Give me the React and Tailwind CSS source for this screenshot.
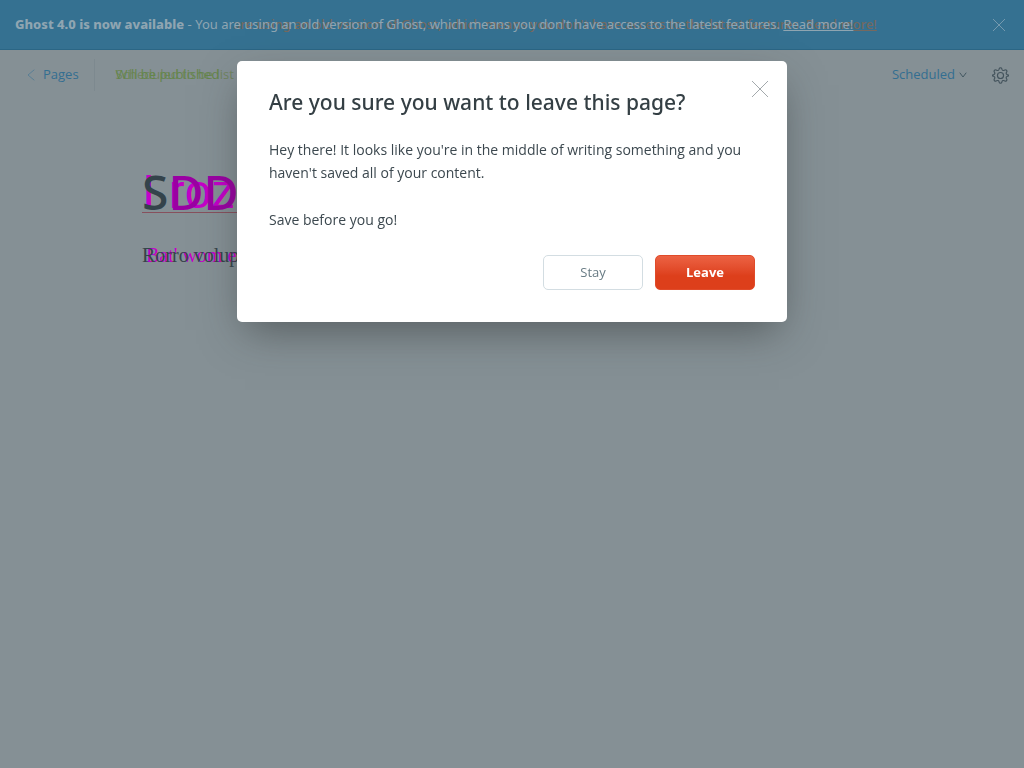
function CloseIcon({ className }) {
  return (
    <svg viewBox="0 0 16 16" className={className} fill="none" stroke="currentColor" aria-hidden="true">
      <path d="M0 0 16 16M16 0 0 16" strokeWidth="0.9" vectorEffect="non-scaling-stroke" />
    </svg>
  );
}

function Chevron({ className, d, viewBox }) {
  return (
    <svg viewBox={viewBox} className={className} fill="none" stroke="currentColor" strokeLinecap="round" aria-hidden="true">
      <path d={d} />
    </svg>
  );
}

function GearIcon() {
  return (
    <svg viewBox="0 0 24 24" className="size-[17px]" fill="none" stroke="currentColor" strokeWidth="1.6" strokeLinejoin="round" aria-hidden="true">
      <circle cx="12" cy="12" r="4.3" />
      <path d="M10.2 2.2C10.6.7 13.4.7 13.8 2.2l.3 1.2c.4 1.4 1.9 2 3.2 1.3l1.1-.6c1.3-.7 3.2 1.2 2.5 2.5l-.6 1.1c-.7 1.3 0 2.8 1.3 3.2l.9.2c1.1.4 1.1 1.4 0 1.8l-.9.2c-1.4.4-2 1.9-1.3 3.2l.6 1.1c.7 1.3-1.2 3.2-2.5 2.5l-1.1-.6c-1.3-.7-2.8 0-3.2 1.3l-.3 1.2c-.4 1.5-3.2 1.5-3.6 0l-.3-1.2c-.4-1.4-1.9-2-3.2-1.3l-1.1.6c-1.3.7-3.2-1.2-2.5-2.5l.6-1.1c.7-1.3 0-2.8-1.3-3.2l-.9-.2c-1.1-.4-1.1-1.4 0-1.8l.9-.2c1.4-.4 2-1.9 1.3-3.2l-.6-1.1c-.7-1.3 1.2-3.2 2.5-2.5l1.1.6c1.3.7 2.8 0 3.2-1.3Z" />
    </svg>
  );
}

function Banner() {
  return (
    <header className="flex h-[50px] items-center justify-between border-b border-[#2b6685] bg-[#357191] pt-px pr-[19px] pl-[15px] font-['Noto_Sans',sans-serif] text-[13px] text-[#8fa5b1]">
      <p className="relative whitespace-nowrap">
        <strong className="font-extrabold">Ghost 4.0 is now available</strong> - You{" "}
        <span className="relative">
          <span aria-hidden="true" className="absolute top-0 left-3 font-medium text-[#76695f]">
            are using an old version of Ghost, which means you don't have access to the latest features.{" "}
            <span className="underline">Read more!</span>
          </span>
          <span className="relative">
            are using an old version of Ghost, which means you don't have access to the latest features.{" "}
            <a href="#" className="underline">Read more!</a>
          </span>
        </span>
      </p>
      <button type="button" aria-label="Close banner" className="text-[#7d9fb2]">
        <CloseIcon className="size-3 overflow-visible" />
      </button>
    </header>
  );
}

function Toolbar() {
  return (
    <nav className="flex h-[50px] items-center justify-between pr-[15px] pl-[27px] text-[13px] text-[#336e91]">
      <div className="flex items-center">
        <a href="#" className="flex items-center gap-2">
          <Chevron className="h-3 w-2 text-[#5a7f95]" viewBox="0 0 8 12" d="M7 1 1 6l6 5" />
          Pages
        </a>
        <span className="mr-[21px] ml-[15px] h-8 w-px bg-[#7d898f]" />
        <p className="relative text-[13px] whitespace-nowrap text-[#64864a]">
          <span aria-hidden="true" className="absolute top-0 left-0 text-[#708460]">Scheduled to be list</span>
          <span className="relative">Will be published</span>
        </p>
      </div>
      <div className="flex items-center gap-[25px]">
        <button type="button" className="flex items-center gap-1">
          Scheduled
          <Chevron className="h-2 w-2 text-[#435761]" viewBox="0 0 8 8" d="M1 2l3 4 3-4" />
        </button>
        <button type="button" aria-label="Settings" className="text-[#43535c]">
          <GearIcon />
        </button>
      </div>
    </nav>
  );
}

function Editor() {
  return (
    <main className="px-[142px] pt-[72px] whitespace-nowrap">
      <h1 className="relative w-48 border-b border-[#87505d] font-['Noto_Sans',sans-serif] text-[48px] leading-10 font-medium text-[#9a00a3]">
        <span aria-hidden="true" className="absolute top-0 left-0 font-['Liberation_Sans',sans-serif] font-normal text-[#c400c9]">I roz</span>
        <span className="relative"><span className="text-[#34434b]">S</span>DD</span>
      </h1>
      <p className="relative mt-7 font-['Liberation_Serif',serif] text-[20px] leading-7 text-[#35434a]">
        <span aria-hidden="true" className="absolute top-0 left-1 text-[#c400c9]">Bat' wom ea</span>
        <span className="relative">Rorro volupta</span>
      </p>
    </main>
  );
}

function LeaveDialog() {
  return (
    <div className="fixed inset-0 flex items-start justify-center pt-[61px]">
      <section role="dialog" aria-modal="true" aria-labelledby="leave-title" className="relative w-full max-w-[550px] rounded-[5px] bg-white p-8 pt-6 text-[#3c484f] shadow-[0_16px_40px_-8px_rgba(45,50,50,0.55)]">
        <h2 id="leave-title" className="font-['Noto_Sans',sans-serif] text-[21px] leading-[34px] font-medium text-[#343f44]">Are you sure you want to leave this page?</h2>
        <p className="mt-[19px] text-[14px] leading-[23px]">
          Hey there! It looks like you're in the middle of writing something and you haven't saved all of your content.
        </p>
        <p className="mt-6 text-[14px] leading-[23px]">Save before you go!</p>
        <div className="mt-6 flex justify-end gap-3 text-[13px]">
          <button type="button" className="h-[35px] w-[100px] rounded-[5px] border border-[#d3dde2] text-[#687b84]">Stay</button>
          <button type="button" className="h-[35px] w-[100px] rounded-[5px] border border-[#e04b2a] bg-linear-to-b from-[#ec6243] to-[#dd3f1b] to-60% font-bold text-white">Leave</button>
        </div>
        <button type="button" aria-label="Close" className="absolute top-5 right-[19px] text-[#999fa3]">
          <CloseIcon className="size-4 overflow-visible" />
        </button>
      </section>
    </div>
  );
}

export default function App() {
  return (
    <div className="min-h-screen overflow-hidden bg-[#859095] font-['Open_Sans','Noto_Sans',sans-serif]">
      <Banner />
      <Toolbar />
      <Editor />
      <LeaveDialog />
    </div>
  );
}
